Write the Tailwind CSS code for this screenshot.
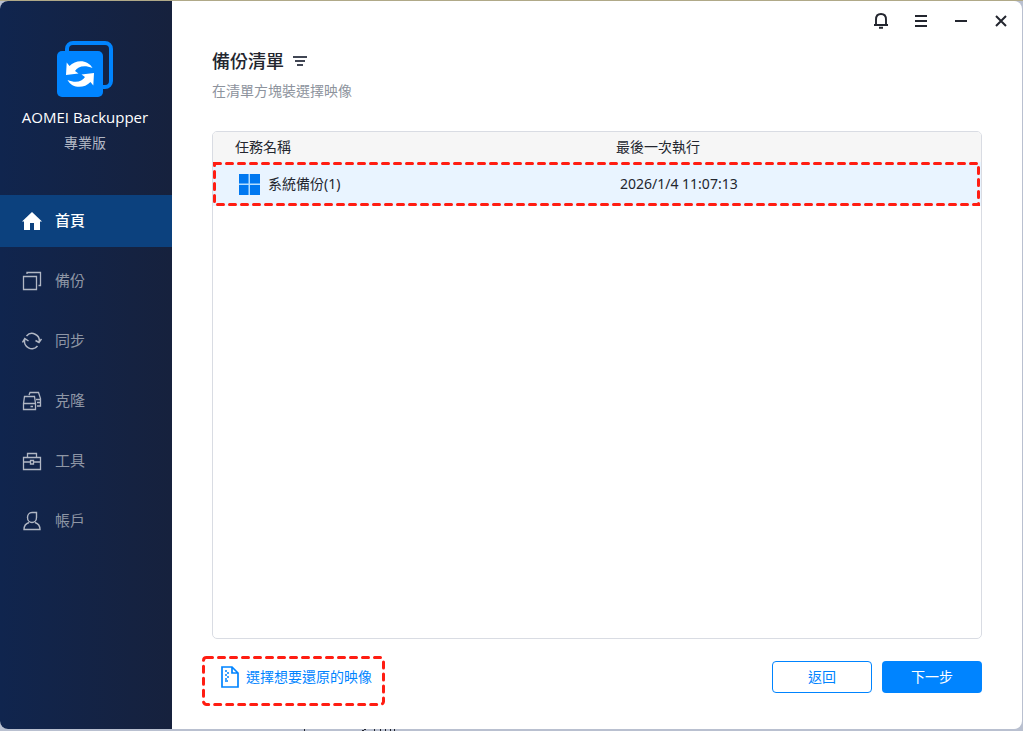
<!DOCTYPE html>
<html lang="zh-Hant">
<head>
<meta charset="utf-8">
<meta name="viewport" content="width=device-width, initial-scale=1">
<title>AOMEI Backupper</title>
<script src="https://cdn.jsdelivr.net/npm/@tailwindcss/browser@4"></script>
</head>
<body class="h-screen overflow-hidden bg-[#b9c0d0] font-['Noto_Sans','Noto_Sans_CJK_TC',sans-serif] text-sm text-[#23262f]">
<div class="relative h-full border-t border-t-[#b0a988] pr-px pb-0.5">
<div class="flex h-full overflow-hidden rounded-lg bg-white">
  <aside class="flex w-43 shrink-0 flex-col bg-linear-to-r from-[#10254e] to-[#16213d]">
    <div class="flex h-[194px] flex-col items-center pt-10 pr-0.5">
      <svg class="size-14" viewBox="0 0 56 56" fill="none">
        <rect x="10" y="2" width="44" height="44" rx="6" stroke="#0084ff" stroke-width="4"/>
        <rect x="0" y="10" width="46" height="46" rx="5" fill="#0084ff"/>
        <path d="M9.700 21.500L9 34l12.500-1.500-3.500-2.500C21 25.500 27 23.500 35.500 27 31 18.500 19 18 12.500 25z" fill="#fff"/>
        <path d="M36.300 44.500L37 32l-12.500 1.500 3.500 2.500C25 40.500 19 42.500 10.500 39 15 47.500 27 48 33.500 41z" fill="#fff"/>
      </svg>
      <p class="mt-2 font-['Open_Sans','Noto_Sans',sans-serif] text-[15px] leading-6 text-white">AOMEI Backupper</p>
      <p class="mt-1 leading-5 text-[#b1b7c4]">專業版</p>
    </div>
    <nav class="flex flex-col gap-2 text-[15px] text-[#8e96a5]">
      <a href="#" class="flex h-13 items-center gap-[13px] bg-[#0c417e] pl-[22px] font-medium text-white">
        <svg class="size-5" viewBox="0 0 20 20" fill="currentColor"><path d="M10 1L0 10.500h2V19h6v-7h4v7h6v-8.500h2z"/></svg>首頁</a>
      <a href="#" class="flex h-13 items-center gap-[13px] pl-[22px]">
        <svg class="size-5 text-[#b1b7c4]" viewBox="0 0 20 20" fill="none" stroke="currentColor" stroke-width="1.300"><path d="M1.500 5.500h13v13h-13zM5 3V1.500h13.500v13H16.500"/></svg>備份</a>
      <a href="#" class="flex h-13 items-center gap-[13px] pl-[22px]">
        <svg class="size-5 text-[#b1b7c4]" viewBox="0 0 20 20" fill="none" stroke="currentColor" stroke-width="1.500"><path d="M4.500 5a7.300 7.300 0 0 1 12.700 6M15.500 15A7.300 7.300 0 0 1 2.800 8.500M.5 11.500L2.800 7.500l3.700 2.500M13.500 9.500l3.500 2L19.500 8"/></svg>同步</a>
      <a href="#" class="flex h-13 items-center gap-[13px] pl-[22px]">
        <svg class="size-5 text-[#b1b7c4]" viewBox="0 0 20 20" fill="none" stroke="currentColor" stroke-width="1.300"><path d="M1.500 12.500L2.500 5.500h10l1 7v6h-12v-6h12M7 4l1-2.500h8.500l2 6V15H15M14 8.500h4.500M15 11.500h3.500M8.500 15.500h2.500"/></svg>克隆</a>
      <a href="#" class="flex h-13 items-center gap-[13px] pl-[22px]">
        <svg class="size-5 text-[#b1b7c4]" viewBox="0 0 20 20" fill="none" stroke="currentColor" stroke-width="1.300"><path d="M1.500 6.500h17v12h-17zM5.500 6.500v-4h9v4M1.500 11H8M12 11h6.500M8.500 9.500h3V13h-3z"/></svg>工具</a>
      <a href="#" class="flex h-13 items-center gap-[13px] pl-[22px]">
        <svg class="size-5 text-[#b1b7c4]" viewBox="0 0 20 20" fill="none" stroke="currentColor" stroke-width="1.400"><path d="M14.500 1.500H10C7 1.500 5.500 4 5.500 6.500c0 3 2 5 4.500 5s4.500-2 4.500-5zM7 11.500c-3 1-5 3-5 7h16c0-4-2-6-5-7"/></svg>帳戶</a>
    </nav>
  </aside>
  <main class="flex min-w-0 flex-1 flex-col">
    <div class="flex h-10 shrink-0 items-center justify-end gap-5 pr-[11px]">
      <button aria-label="通知"><svg class="size-5" viewBox="0 0 20 20" fill="none" stroke="currentColor" stroke-width="1.900"><path d="M5 14V8.500C5 5 7 3 10 3s5 2 5 5.500V14M3 14h14M8 16.800h4"/></svg></button>
      <button aria-label="選單"><svg class="size-5" viewBox="0 0 20 20" fill="none" stroke="currentColor" stroke-width="2"><path d="M4 5h12M4 10h12M4 15h12"/></svg></button>
      <button aria-label="最小化"><svg class="size-5" viewBox="0 0 20 20" fill="none" stroke="currentColor" stroke-width="2"><path d="M4 10h12"/></svg></button>
      <button aria-label="關閉"><svg class="size-5" viewBox="0 0 20 20" fill="none" stroke="currentColor" stroke-width="2"><path d="M5 5l10 10M15 5L5 15"/></svg></button>
    </div>
    <div class="flex flex-1 flex-col px-10 pt-2">
      <div class="flex items-center gap-2">
        <h1 class="text-lg leading-6 font-medium">備份清單</h1>
        <button aria-label="篩選"><svg class="h-3 w-4" viewBox="0 0 16 12" fill="none" stroke="#414654" stroke-width="2"><path d="M1 2h14M3 6h10M5 10h6"/></svg></button>
      </div>
      <p class="mt-2 leading-5 text-[#8d939d]">在清單方塊裝選擇映像</p>
      <div class="relative mt-[30px] flex-1 overflow-hidden rounded-[5px] border border-[#d9dce3]">
        <table class="w-full table-fixed text-left">
          <thead><tr class="h-[30px] bg-[#f6f6f6]"><th class="w-[381px] pl-[22px] font-normal">任務名稱</th><th class="pl-[22px] font-normal">最後一次執行</th></tr></thead>
          <tbody><tr class="h-11 bg-[#e9f4ff]">
            <td class="pl-[26px]"><div class="flex items-center gap-2"><svg class="size-[21px]" viewBox="0 0 21 21"><path fill="#b5deff" d="M0 0h21v21H0z"/><path fill="#0078f0" d="M0 0h9.500v9.500H0zM11 0h10v9.500H11zM0 11h9.500v10H0zM11 11h10v10H11z"/></svg>系統備份(1)</div></td>
            <td class="pl-[26px]">2026/1/4 11:07:13</td>
          </tr></tbody>
        </table>
        <svg class="pointer-events-none absolute top-[30px] left-0 h-11 w-full" fill="none"><rect x="1.500" y="1.500" class="h-[41px] w-[calc(100%-4px)]" stroke="#ff1d12" stroke-width="3" stroke-dasharray="6 6" stroke-linecap="round"/></svg>
      </div>
      <div class="flex h-[90px] shrink-0 items-start justify-between pt-[22px]">
        <div class="relative -mt-[5px] -ml-[10px] h-[50px] w-[183px]">
          <a href="#" class="flex h-[42px] items-center gap-[7px] pl-[19px] text-[#0084ff]">
            <svg class="h-[22px] w-[18px]" viewBox="0 0 18 22" fill="none" stroke="currentColor" stroke-width="1.700"><path d="M1 1h10l6 6v14H1zM11 1v6h6"/><path d="M4 5h2M6 7h2M4 9h2M6 11h2M4 13h2M4 15h3"/></svg>選擇想要還原的映像</a>
          <svg class="pointer-events-none absolute inset-0 size-full" fill="none"><rect x="1.500" y="1.500" rx="3" class="h-[47px] w-[180px]" stroke="#ff1d12" stroke-width="3" stroke-dasharray="6 6" stroke-linecap="round"/></svg>
        </div>
        <div class="flex gap-2.5">
          <button class="h-8 w-25 rounded-sm border border-[#0084ff] text-[#0084ff]">返回</button>
          <button class="h-8 w-25 rounded-sm bg-[#0084ff] text-white">下一步</button>
        </div>
      </div>
    </div>
  </main>
</div>
<svg class="absolute bottom-0 left-[304px] h-0.5 w-24" viewBox="0 0 96 2" fill="#23262f" aria-hidden="true"><path d="M0 0h1v2H0zM60 0h2v1h-2zM58 1h2v1h-2zM70 0h1v2h-1zM76 0h1v2h-1zM81 0h1v2h-1zM86 0h1v2h-1zM90 0h1v2h-1z"/></svg>
</div>
</body>
</html>
